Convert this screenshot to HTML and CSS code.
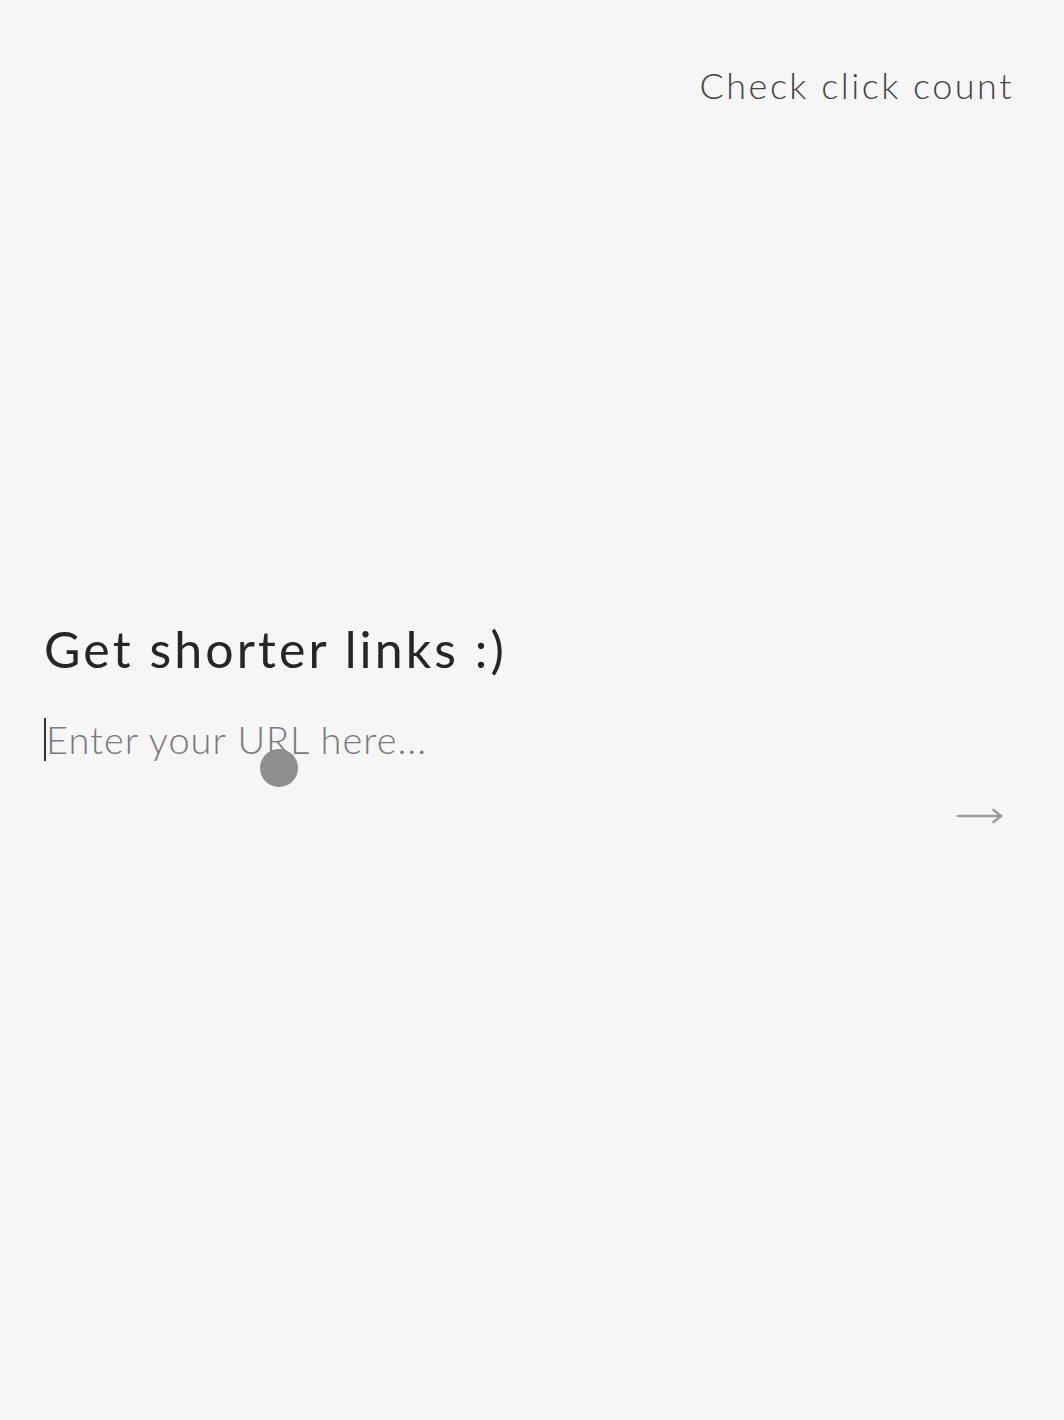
FILE: index.html
```html
<!DOCTYPE html>
<html lang="en">
<head>
<meta charset="utf-8">
<title>Get shorter links</title>
<link rel="stylesheet" href="styles.css">
</head>
<body>
<header class="top">
  <a class="count-link" href="#">Check click count</a>
</header>
<main class="hero">
  <form class="shorten">
    <h1 class="title">Get shorter links :)</h1>
    <div class="field">
      <span class="caret"></span>
      <input class="url" type="text" placeholder="Enter your URL here...">
      <span class="cursor-dot"></span>
    </div>
    <div class="actions">
      <button class="go" type="button" aria-label="Shorten">
        <svg width="48" height="20" viewBox="0 0 48 20" fill="none" stroke="#9c9c9c" stroke-width="2.6" stroke-linecap="round" stroke-linejoin="round">
          <path d="M2 10 H45"/>
          <path d="M37.5 4 L45 10 L37.5 16"/>
        </svg>
      </button>
    </div>
  </form>
</main>
</body>
</html>
```

FILE: styles.css
```css
html, body {
  margin: 0;
  padding: 0;
}
body {
  background: #f6f6f6;
  font-family: "Lato", "Noto Sans", sans-serif;
  min-height: 1420px;
}
.top {
  display: flex;
  justify-content: flex-end;
  padding: 61px 50px 0 0;
}
.count-link {
  font-size: 36px;
  font-weight: 300;
  letter-spacing: 2.5px;
  color: #444;
  text-decoration: none;
  line-height: 48px;
}
.hero {
  padding: 510px 44px 0 44px;
}
.shorten {
  display: flex;
  flex-direction: column;
}
.title {
  margin: 0;
  font-size: 50px;
  font-weight: 400;
  letter-spacing: 3.1px;
  color: #262626;
  line-height: 60px;
}
.field {
  position: relative;
  display: flex;
  align-items: center;
  margin-top: 38px;
  height: 44px;
}
.caret {
  width: 2px;
  height: 43px;
  background: #333;
  flex: none;
}
.url {
  flex: 1;
  border: none;
  outline: none;
  background: transparent;
  padding: 0;
  font-family: inherit;
  font-size: 38px;
  font-weight: 300;
  letter-spacing: 1px;
  color: #333;
}
.url::placeholder {
  color: #7a7a7a;
}
.cursor-dot {
  position: absolute;
  left: 216px;
  top: 32px;
  width: 38px;
  height: 38px;
  border-radius: 50%;
  background: #8e8e8e;
}
.actions {
  display: flex;
  justify-content: flex-end;
  margin-top: 45px;
  padding-right: 16px;
}
.go {
  border: none;
  background: transparent;
  padding: 0;
  cursor: pointer;
  display: flex;
}
```
